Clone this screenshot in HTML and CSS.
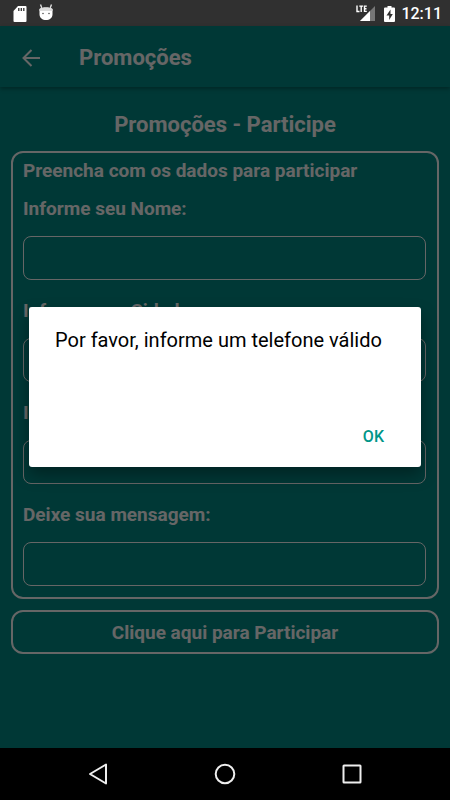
FILE: index.html
```html
<!DOCTYPE html>
<html lang="pt-BR">
  <head>
    <meta charset="UTF-8" />
    <meta name="viewport" content="width=device-width, initial-scale=1.0" />
    <title>Promoções</title>
    <link rel="stylesheet" href="styles.css">
  </head>
  <body>
    <div class="phone">
      <div class="statusbar">
        <svg class="sdcard" width="14" height="16" viewBox="0 0 14 16">
          <path d="M5 0h7.500a1 1 0 0 1 1 1v14a1 1 0 0 1-1 1h-11a1 1 0 0 1-1-1V5z" fill="#fff" />
          <path d="M5.800 2v3M8.300 2v3M10.800 2v3" stroke="#303030" stroke-width="1.300" />
        </svg>
        <svg class="debug" width="14" height="17" viewBox="0 0 14 17">
          <path d="M1.500 .5 3 4.500M12.500 .5 11 4.500" stroke="#ddd" stroke-width="1.400" />
          <path d="M.5 5C2 4 4 3.500 7 3.500s5 .5 6.500 1.500v5c0 4-3 6-6.500 6S.5 14 .5 10z" fill="#fff" />
          <path d="M.5 7V5C2 4 4 3.500 7 3.500s5 .5 6.500 1.500v2z" fill="#ddd" />
          <circle cx="4" cy="9.500" r=".8" fill="#555" />
          <circle cx="10" cy="9.500" r=".8" fill="#555" />
        </svg>
        <span class="space"></span>
        <svg class="signal" width="20" height="17" viewBox="0 0 20 17">
          <path d="M19 1v15H4z" fill="#777" />
          <path d="M14 6v10H4z" fill="#fff" />
          <path d="M0 0h11v8H0z" fill="#303030" />
          <path d="M1 .5v6h2.500M3.300 1.100h3.800M5.200 1v6M10.800 1.100H8.500v5.300h2.300M8.500 3.700h2" fill="none" stroke="#fff" stroke-width="1.400" />
        </svg>
        <svg class="battery" width="11" height="16" viewBox="0 0 11 16">
          <path d="M3.500 0h4v1.500H10a1 1 0 0 1 1 1V15a1 1 0 0 1-1 1H1a1 1 0 0 1-1-1V2.500a1 1 0 0 1 1-1h2.500z" fill="#fff" />
          <path d="M6.500 3.500 2.500 9.500h2.700V14l3.600-6H6.500z" fill="#303030" />
        </svg>
        <span class="time">12:11</span>
      </div>

      <div class="app">
        <header class="appbar">
          <button type="button" class="back" aria-label="Voltar">
            <svg width="18" height="18" viewBox="0 0 18 18">
              <path d="M18 9H1.500M9.500 1 1.500 9l8 8" fill="none" stroke="#fff" stroke-width="2" />
            </svg>
          </button>
          <h1>Promoções</h1>
        </header>

        <form class="content">
          <h2>Promoções - Participe</h2>
          <div class="card">
            <p>Preencha com os dados para participar</p>
            <label for="nome">Informe seu Nome:</label>
            <input type="text" id="nome" />
            <label for="cidade">Informe sua Cidade:</label>
            <input type="text" id="cidade" />
            <label for="telefone">Informe seu Telefone:</label>
            <input type="tel" id="telefone" />
            <label for="mensagem">Deixe sua mensagem:</label>
            <input type="text" id="mensagem" />
          </div>
          <button type="button" class="send">Clique aqui para Participar</button>
        </form>

        <!-- alerta -->
        <div class="overlay">
          <div class="dialog" role="alertdialog" aria-labelledby="aviso">
            <p id="aviso">Por favor, informe um telefone válido</p>
            <button type="button" class="ok">OK</button>
          </div>
        </div>
      </div>

      <nav class="navbar">
        <button type="button" aria-label="Voltar">
          <svg width="22" height="22" viewBox="0 0 22 22">
            <path d="M19 1.500v19L3 11z" />
          </svg>
        </button>
        <button type="button" aria-label="Início">
          <svg width="22" height="22" viewBox="0 0 22 22">
            <circle cx="11" cy="11" r="9.300" />
          </svg>
        </button>
        <button type="button" aria-label="Recentes">
          <svg width="22" height="22" viewBox="0 0 22 22">
            <rect x="2.500" y="2.500" width="17" height="17" rx=".5" />
          </svg>
        </button>
      </nav>
    </div>
  </body>
</html>
```

FILE: styles.css
```css
* {
  margin: 0;
  padding: 0;
  box-sizing: border-box;
}
body {
  font-family: Roboto, "Liberation Sans", sans-serif;
  background-color: #000;
}
button {
  font-family: inherit;
  background: none;
  border: none;
  cursor: pointer;
}
svg {
  display: block;
}
.phone {
  min-height: 100vh;
  display: flex;
  flex-direction: column;
}
/* barra de status */
.statusbar {
  height: 26px;
  padding: 1px 8px 0 13px;
  display: flex;
  align-items: center;
  background-color: #303030;
  color: #fff;
}
.statusbar .debug {
  margin: 0 0 2px 12px;
}
.statusbar .space {
  flex: 1;
}
.statusbar .battery {
  margin: 0 6px 0 8px;
}
.statusbar .time {
  font-size: 16px;
  font-weight: 500;
  line-height: 26px;
}
/* tela */
.app {
  flex: 1;
  position: relative;
  background-color: #008c87;
  color: #fff;
}
.appbar {
  height: 61px;
  padding: 2px 22px 0;
  display: flex;
  align-items: center;
  gap: 39px;
  box-shadow: 0 2px 4px rgba(0, 0, 0, 0.3);
}
.appbar h1 {
  font-size: 22px;
  line-height: 28px;
}
.content {
  padding: 24px 11px;
}
.content h2 {
  font-size: 22px;
  line-height: 28px;
  margin-bottom: 12px;
  text-align: center;
}
.card {
  border: 2px solid #fff;
  border-radius: 12px;
  padding: 6px 11px 11px 10px;
  font-size: 19px;
  font-weight: bold;
  line-height: 24px;
}
.card label {
  display: block;
  margin: 19px 0 15px;
}
.card p + label {
  margin-top: 14px;
}
.card input {
  display: block;
  width: 100%;
  height: 44px;
  padding: 0 10px;
  border: 1px solid #fff;
  border-radius: 8px;
  background: none;
  color: #fff;
  font: inherit;
}
.send {
  width: 100%;
  height: 44px;
  margin-top: 11px;
  border: 2px solid #fff;
  border-radius: 12px;
  color: #fff;
  font-size: 19px;
  font-weight: bold;
}
/* alerta */
.overlay {
  position: absolute;
  top: 0;
  right: 0;
  bottom: 0;
  left: 0;
  padding: 0 29px;
  display: flex;
  align-items: center;
  background-color: rgba(0, 0, 0, 0.6);
}
.dialog {
  flex: 1;
  min-height: 160px;
  padding: 19px 27px 16px 26px;
  display: flex;
  flex-direction: column;
  justify-content: space-between;
  border-radius: 3px;
  background-color: #fff;
  color: #000;
  box-shadow: 0 8px 16px rgba(0, 0, 0, 0.35);
}
.dialog p {
  font-size: 20px;
  line-height: 28px;
}
.dialog .ok {
  align-self: flex-end;
  padding: 4px 10px;
  color: #009688;
  font-size: 16px;
  font-weight: 500;
  line-height: 20px;
}
/* botões do sistema */
.navbar {
  height: 52px;
  padding: 0 35px;
  display: flex;
  align-items: center;
  background-color: #000;
}
.navbar button {
  flex: 1;
  display: flex;
  justify-content: center;
}
.navbar svg {
  fill: none;
  stroke: #eee;
  stroke-width: 2;
  stroke-linejoin: round;
}
```
